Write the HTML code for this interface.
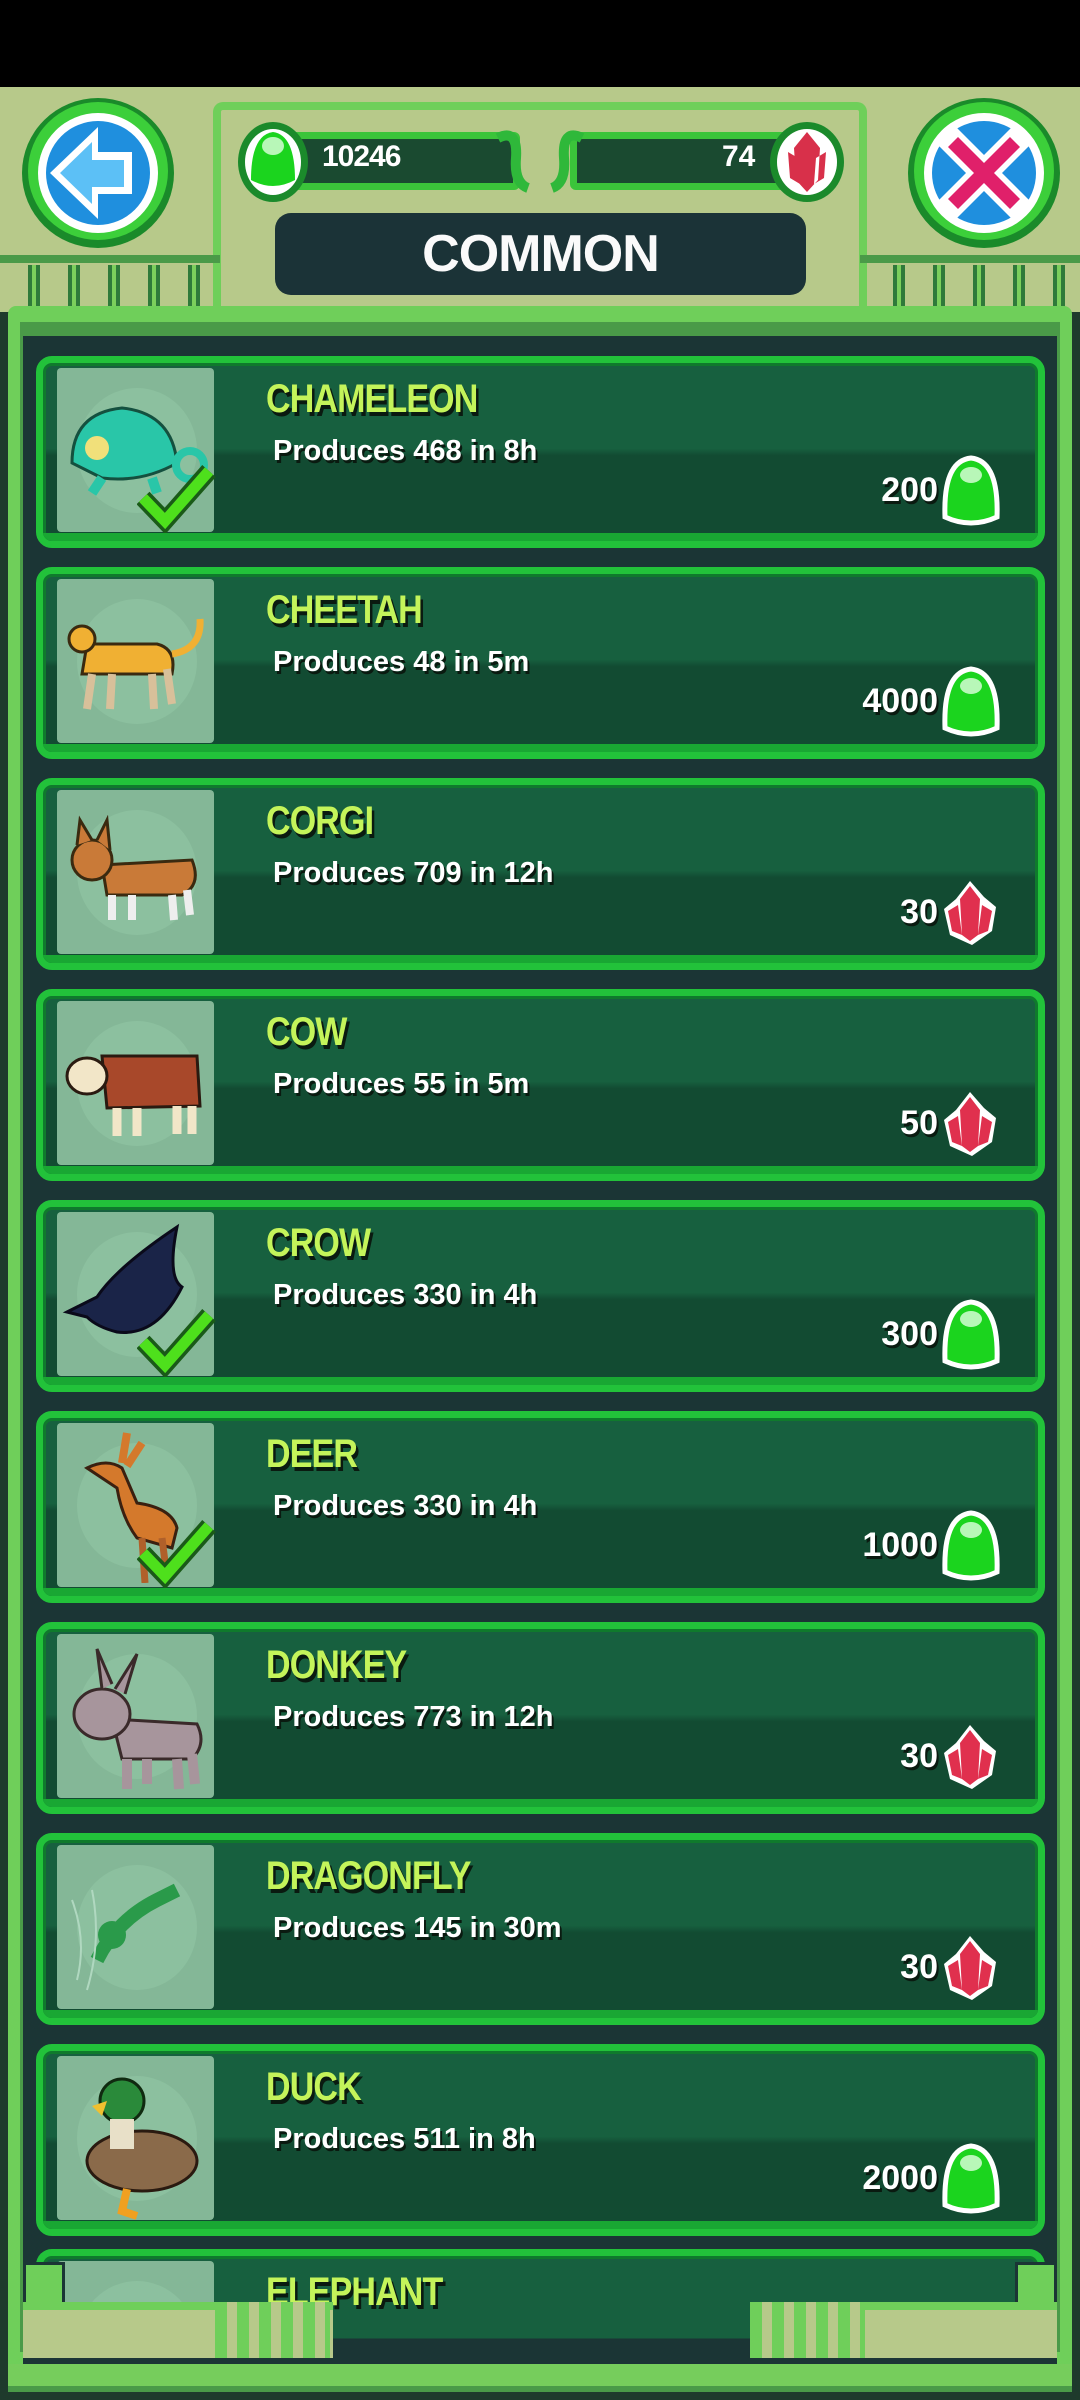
<!DOCTYPE html>
<html><head><meta charset="utf-8">
<style>
*{margin:0;padding:0;box-sizing:border-box}
body{width:1080px;height:2400px;overflow:hidden;background:#1e3a2c;position:relative;font-family:"Liberation Sans",sans-serif}
.abs{position:absolute}
.card{position:absolute;left:36px;width:1009px;height:192px;border-radius:16px;border:7px solid #22c23a;background:linear-gradient(#17603f 0,#17603f 48%,#124b32 52%,#124b32 100%);box-shadow:inset 0 0 0 3px #0f7a2c;overflow:hidden}
.card:before{content:"";position:absolute;left:0;right:0;bottom:0;height:8px;background:#19a733}
.thumb{position:absolute;left:14px;top:5px;width:157px;height:164px;background:#84b797;border-radius:4px}
.thumb .c{position:absolute;left:20px;top:20px;width:120px;height:125px;border-radius:50%;background:#8cc09f}
.name{position:absolute;left:223px;top:14px;font-weight:bold;font-size:40px;color:#c4f45a;letter-spacing:-1px;text-shadow:3px 4px 0 #0a1a10;transform:scaleX(.85);transform-origin:left}
.desc{position:absolute;left:230px;top:72px;font-weight:bold;font-size:29px;color:#fff;text-shadow:2px 3px 0 #0a1a10}
.price{position:absolute;right:100px;top:108px;font-weight:bold;font-size:34px;color:#fff;text-shadow:2px 3px 0 #0a1a10}
.icon{position:absolute;right:36px;top:92px}
.check{position:absolute;left:80px;top:95px}
</style></head><body>
<div class="abs" style="left:0;top:0;width:1080px;height:87px;background:#000"></div>
<div class="abs" style="left:0;top:87px;width:1080px;height:225px;background:#b7c98a"></div>
<!-- header frame -->
<div class="abs" style="left:213px;top:102px;width:654px;height:210px;border:8px solid #6fcf5a;border-bottom:none;border-radius:10px 10px 0 0"></div>
<div class="abs" style="left:0;top:255px;width:220px;height:8px;background:#4a9a48"></div>
<div class="abs" style="left:860px;top:255px;width:220px;height:8px;background:#4a9a48"></div>
<div class="abs" style="left:0;top:265px;width:215px;height:45px;background:repeating-linear-gradient(90deg,transparent 0,transparent 28px,#2f7a3a 28px,#2f7a3a 32px,#7ccf5c 32px,#7ccf5c 36px,#2f7a3a 36px,#2f7a3a 40px)"></div>
<div class="abs" style="left:865px;top:265px;width:215px;height:45px;background:repeating-linear-gradient(90deg,transparent 0,transparent 28px,#2f7a3a 28px,#2f7a3a 32px,#7ccf5c 32px,#7ccf5c 36px,#2f7a3a 36px,#2f7a3a 40px)"></div>
<!-- back button -->
<svg class="abs" style="left:20px;top:97px" width="156" height="152" viewBox="0 0 156 152">
<ellipse cx="78" cy="76" rx="76" ry="75" fill="#1a8a2a"/><ellipse cx="78" cy="74" rx="70" ry="69" fill="#3ccf3a"/>
<ellipse cx="78" cy="76" rx="60" ry="60" fill="#fff"/><ellipse cx="78" cy="76" rx="52" ry="52" fill="#1f8fde"/>
<path d="M30 76 L78 30 L78 55 L112 55 L112 97 L78 97 L78 122 Z" fill="#fff"/>
<path d="M40 76 L72 45 L72 63 L104 63 L104 90 L72 90 L72 107 Z" fill="#5cc0f6"/>
</svg>
<!-- close button -->
<svg class="abs" style="left:906px;top:97px" width="156" height="152" viewBox="0 0 156 152">
<ellipse cx="78" cy="76" rx="76" ry="75" fill="#1a8a2a"/><ellipse cx="78" cy="74" rx="70" ry="69" fill="#3ccf3a"/>
<ellipse cx="78" cy="76" rx="60" ry="60" fill="#fff"/><ellipse cx="78" cy="76" rx="52" ry="52" fill="#1f8fde"/>
<path d="M50 30 L78 58 L106 30 L124 48 L96 76 L124 104 L106 122 L78 94 L50 122 L32 104 L60 76 L32 48 Z" fill="#fff"/>
<path d="M52 40 L78 66 L104 40 L114 50 L88 76 L114 102 L104 112 L78 86 L52 112 L42 102 L68 76 L42 50 Z" fill="#e0206a"/>
</svg>
<!-- currency bar -->
<div class="abs" style="left:290px;top:132px;width:230px;height:58px;background:#1a4a30;border:7px solid #3bc43a;border-radius:6px"></div>
<div class="abs" style="left:570px;top:132px;width:230px;height:58px;background:#1a4a30;border:7px solid #3bc43a;border-radius:6px"></div>
<svg class="abs" style="left:236px;top:120px" width="74" height="84" viewBox="0 0 74 84"><ellipse cx="37" cy="42" rx="35" ry="40" fill="#1b8a2b"/><ellipse cx="37" cy="42" rx="28" ry="33" fill="#fff"/><path d="M15 60 Q15 15 37 12 Q59 15 59 60 Q37 72 15 60Z" fill="#1bd41e"/><ellipse cx="37" cy="26" rx="11" ry="9" fill="#b8f7b8"/></svg>
<div class="abs" style="left:322px;top:140px;font-weight:bold;font-size:30px;color:#fff;letter-spacing:-1px">10246</div>
<div class="abs" style="left:722px;top:140px;font-weight:bold;font-size:30px;color:#fff">74</div>
<svg class="abs" style="left:768px;top:120px" width="78" height="84" viewBox="0 0 78 84"><ellipse cx="39" cy="42" rx="37" ry="40" fill="#1b8a2b"/><ellipse cx="39" cy="42" rx="30" ry="33" fill="#fff"/><path d="M39 12 L52 28 L50 60 L39 72 L28 60 L26 28Z M20 32 L30 38 L32 64 L22 58Z M58 32 L48 38 L46 64 L56 58Z" fill="#d8304a"/></svg>
<svg class="abs" style="left:488px;top:128px" width="104" height="66" viewBox="0 0 104 66"><path d="M10 10 Q30 0 28 30 Q26 55 40 60 M94 10 Q74 0 76 30 Q78 55 64 60" stroke="#2fb83a" stroke-width="10" fill="none"/></svg>
<!-- COMMON -->
<div class="abs" style="left:275px;top:213px;width:531px;height:82px;background:#1b3337;border-radius:16px;color:#fafafa;font-weight:bold;font-size:52px;text-align:center;line-height:82px;letter-spacing:-1px">COMMON</div>
<!-- main panel frame -->
<div class="abs" style="left:8px;top:306px;width:1064px;height:2090px;background:#6fcf5a;border-radius:8px"></div>
<div class="abs" style="left:20px;top:322px;width:1040px;height:2030px;background:#4a9a48"></div>
<div class="abs" style="left:23px;top:336px;width:1034px;height:2020px;background:#1b3535"></div>

<!-- cards -->
<div class="card" style="top:356px"><div class="thumb"><div class="c"></div>
<svg class="abs" style="left:5px;top:25px" width="150" height="110"><path d="M10 70 Q10 20 60 15 Q110 20 115 70 Q80 90 40 85Z" fill="#29c6a8" stroke="#14503f" stroke-width="3"/><circle cx="35" cy="55" r="12" fill="#f1e07a"/><circle cx="128" cy="72" r="14" fill="none" stroke="#29c6a8" stroke-width="8"/><path d="M40 85 L30 100 M90 85 L95 100" stroke="#29c6a8" stroke-width="10"/></svg>
<svg class="check" width="80" height="70"><path d="M6 35 L28 58 L72 8" stroke="#1a5a18" stroke-width="18" fill="none"/><path d="M6 35 L28 58 L72 8" stroke="#4ee01c" stroke-width="11" fill="none"/></svg></div>
<div class="name">CHAMELEON</div><div class="desc">Produces 468 in 8h</div><div class="price">200</div>
<svg class="icon" width="62" height="72"><path d="M5 62 Q3 6 31 3 Q59 6 57 62 Q31 74 5 62Z" fill="#1bd41e" stroke="#fff" stroke-width="5"/><ellipse cx="31" cy="20" rx="11" ry="8" fill="#b8f7b8"/></svg></div>

<div class="card" style="top:567px"><div class="thumb"><div class="c"></div>
<svg class="abs" style="left:5px;top:35px" width="150" height="110"><path d="M25 30 L95 30 Q115 35 110 60 L20 60Z" fill="#f0b033" stroke="#3a2a10" stroke-width="3"/><circle cx="20" cy="25" r="13" fill="#f0b033" stroke="#3a2a10" stroke-width="3"/><path d="M30 60 L25 95 M50 60 L48 95 M90 60 L92 95 M105 55 L110 90" stroke="#d8c09a" stroke-width="8"/><path d="M110 40 Q140 35 138 5" stroke="#f0b033" stroke-width="7" fill="none"/></svg></div>
<div class="name">CHEETAH</div><div class="desc">Produces 48 in 5m</div><div class="price">4000</div>
<svg class="icon" width="62" height="72"><path d="M5 62 Q3 6 31 3 Q59 6 57 62 Q31 74 5 62Z" fill="#1bd41e" stroke="#fff" stroke-width="5"/><ellipse cx="31" cy="20" rx="11" ry="8" fill="#b8f7b8"/></svg></div>

<div class="card" style="top:778px"><div class="thumb"><div class="c"></div>
<svg class="abs" style="left:5px;top:25px" width="150" height="120"><path d="M40 50 L130 45 Q140 70 120 80 L45 80Z" fill="#c97a38" stroke="#3a2a10" stroke-width="3"/><circle cx="30" cy="45" r="20" fill="#c97a38" stroke="#3a2a10" stroke-width="3"/><path d="M15 30 L18 5 L30 25 M35 25 L45 5 L48 35" fill="#c97a38" stroke="#3a2a10" stroke-width="3"/><path d="M50 80 L50 105 M70 80 L70 105 M110 80 L112 105 M125 75 L128 100" stroke="#eee" stroke-width="8"/></svg></div>
<div class="name">CORGI</div><div class="desc">Produces 709 in 12h</div><div class="price">30</div>
<svg class="icon" width="64" height="72" viewBox="0 0 64 72"><path d="M32 4 L46 20 L58 30 L54 54 L34 68 L12 58 L6 32 L18 22Z" fill="#fff"/><path d="M32 9 L42 22 L40 58 L32 64 L24 58 L22 22Z M10 34 L20 28 L24 58 L14 54Z M54 34 L44 28 L40 58 L50 54Z" fill="#e0304e"/></svg></div>

<div class="card" style="top:989px"><div class="thumb"><div class="c"></div>
<svg class="abs" style="left:5px;top:35px" width="150" height="110"><path d="M40 20 L135 20 L138 70 L45 72Z" fill="#a8482a" stroke="#2a1a10" stroke-width="3"/><ellipse cx="25" cy="40" rx="20" ry="18" fill="#f2e6c8" stroke="#2a1a10" stroke-width="3"/><path d="M55 72 L55 100 M75 72 L75 100 M115 70 L115 98 M130 70 L130 98" stroke="#f2e6c8" stroke-width="9"/></svg></div>
<div class="name">COW</div><div class="desc">Produces 55 in 5m</div><div class="price">50</div>
<svg class="icon" width="64" height="72" viewBox="0 0 64 72"><path d="M32 4 L46 20 L58 30 L54 54 L34 68 L12 58 L6 32 L18 22Z" fill="#fff"/><path d="M32 9 L42 22 L40 58 L32 64 L24 58 L22 22Z M10 34 L20 28 L24 58 L14 54Z M54 34 L44 28 L40 58 L50 54Z" fill="#e0304e"/></svg></div>

<div class="card" style="top:1200px"><div class="thumb"><div class="c"></div>
<svg class="abs" style="left:0;top:5px" width="155" height="150"><path d="M10 95 L40 80 Q60 50 120 10 Q110 60 125 70 Q100 120 60 115 Q40 110 30 100Z" fill="#1a2448" stroke="#0a0a1a" stroke-width="3"/></svg>
<svg class="check" width="80" height="70"><path d="M6 35 L28 58 L72 8" stroke="#1a5a18" stroke-width="18" fill="none"/><path d="M6 35 L28 58 L72 8" stroke="#4ee01c" stroke-width="11" fill="none"/></svg></div>
<div class="name">CROW</div><div class="desc">Produces 330 in 4h</div><div class="price">300</div>
<svg class="icon" width="62" height="72"><path d="M5 62 Q3 6 31 3 Q59 6 57 62 Q31 74 5 62Z" fill="#1bd41e" stroke="#fff" stroke-width="5"/><ellipse cx="31" cy="20" rx="11" ry="8" fill="#b8f7b8"/></svg></div>

<div class="card" style="top:1411px"><div class="thumb"><div class="c"></div>
<svg class="abs" style="left:20px;top:5px" width="130" height="155"><path d="M10 40 Q30 30 45 40 L60 75 Q95 80 100 100 L95 120 L60 110 Q45 90 40 60Z" fill="#d4792c" stroke="#3a2010" stroke-width="3"/><path d="M45 35 L50 5 M50 38 L65 15" stroke="#d4792c" stroke-width="8"/><path d="M65 110 L68 155 M85 110 L90 150" stroke="#b0602a" stroke-width="7"/></svg>
<svg class="check" width="80" height="70"><path d="M6 35 L28 58 L72 8" stroke="#1a5a18" stroke-width="18" fill="none"/><path d="M6 35 L28 58 L72 8" stroke="#4ee01c" stroke-width="11" fill="none"/></svg></div>
<div class="name">DEER</div><div class="desc">Produces 330 in 4h</div><div class="price">1000</div>
<svg class="icon" width="62" height="72"><path d="M5 62 Q3 6 31 3 Q59 6 57 62 Q31 74 5 62Z" fill="#1bd41e" stroke="#fff" stroke-width="5"/><ellipse cx="31" cy="20" rx="11" ry="8" fill="#b8f7b8"/></svg></div>

<div class="card" style="top:1622px"><div class="thumb"><div class="c"></div>
<svg class="abs" style="left:10px;top:10px" width="140" height="150"><path d="M45 75 L130 80 Q140 100 125 115 L55 115Z" fill="#a7959c" stroke="#3a2a2a" stroke-width="3"/><ellipse cx="35" cy="70" rx="28" ry="25" fill="#a7959c" stroke="#3a2a2a" stroke-width="3"/><path d="M35 45 L30 5 L45 40 M48 45 L70 10 L58 50" fill="#a7959c" stroke="#3a2a2a" stroke-width="3"/><path d="M60 115 L60 145 M80 115 L80 140 M110 115 L112 145 M125 110 L128 140" stroke="#a7959c" stroke-width="10"/></svg></div>
<div class="name">DONKEY</div><div class="desc">Produces 773 in 12h</div><div class="price">30</div>
<svg class="icon" width="64" height="72" viewBox="0 0 64 72"><path d="M32 4 L46 20 L58 30 L54 54 L34 68 L12 58 L6 32 L18 22Z" fill="#fff"/><path d="M32 9 L42 22 L40 58 L32 64 L24 58 L22 22Z M10 34 L20 28 L24 58 L14 54Z M54 34 L44 28 L40 58 L50 54Z" fill="#e0304e"/></svg></div>

<div class="card" style="top:1833px"><div class="thumb"><div class="c"></div>
<svg class="abs" style="left:10px;top:15px" width="140" height="140"><path d="M30 100 Q50 60 90 40 L110 30" stroke="#2a9a4a" stroke-width="14" fill="none"/><circle cx="45" cy="75" r="14" fill="#2a9a4a"/><path d="M5 40 Q20 80 10 120 M25 30 Q35 80 20 130" stroke="#b0d8c0" stroke-width="2" fill="none"/></svg></div>
<div class="name">DRAGONFLY</div><div class="desc">Produces 145 in 30m</div><div class="price">30</div>
<svg class="icon" width="64" height="72" viewBox="0 0 64 72"><path d="M32 4 L46 20 L58 30 L54 54 L34 68 L12 58 L6 32 L18 22Z" fill="#fff"/><path d="M32 9 L42 22 L40 58 L32 64 L24 58 L22 22Z M10 34 L20 28 L24 58 L14 54Z M54 34 L44 28 L40 58 L50 54Z" fill="#e0304e"/></svg></div>

<div class="card" style="top:2044px"><div class="thumb"><div class="c"></div>
<svg class="abs" style="left:15px;top:5px" width="140" height="160"><ellipse cx="70" cy="100" rx="55" ry="30" fill="#8a6a4a" stroke="#2a1a10" stroke-width="3"/><circle cx="50" cy="40" r="22" fill="#2a8a3a" stroke="#102a10" stroke-width="3"/><rect x="38" y="58" width="24" height="30" fill="#e8e0c8"/><path d="M20 45 L35 40 L30 55Z" fill="#f0c030"/><path d="M55 128 L50 150 L65 155" stroke="#f0a020" stroke-width="8" fill="none"/></svg></div>
<div class="name">DUCK</div><div class="desc">Produces 511 in 8h</div><div class="price">2000</div>
<svg class="icon" width="62" height="72"><path d="M5 62 Q3 6 31 3 Q59 6 57 62 Q31 74 5 62Z" fill="#1bd41e" stroke="#fff" stroke-width="5"/><ellipse cx="31" cy="20" rx="11" ry="8" fill="#b8f7b8"/></svg></div>

<div class="card" style="top:2249px;height:140px;border-bottom:none;background:linear-gradient(#17603f 0,#17603f 62%,#1b3535 62%)"><div class="thumb" style="height:130px"><div class="c"></div><div class="abs" style="left:40px;top:60px;width:80px;height:60px;border-radius:50%;background:#8080c8"></div></div>
<div class="name">ELEPHANT</div></div>

<!-- bottom ornaments -->
<div class="abs" style="left:23px;top:2262px;width:42px;height:44px;background:#6fcf5a;border:3px solid #1b3535"></div>
<div class="abs" style="left:23px;top:2302px;width:310px;height:58px;background:#b7c98a;border-top:8px solid #6fcf5a"></div>
<div class="abs" style="left:215px;top:2302px;width:115px;height:58px;background:repeating-linear-gradient(90deg,#6fcf5a 0,#6fcf5a 12px,#b7c98a 12px,#b7c98a 22px)"></div>
<div class="abs" style="left:1015px;top:2262px;width:42px;height:44px;background:#6fcf5a;border:3px solid #1b3535"></div>
<div class="abs" style="left:750px;top:2302px;width:307px;height:58px;background:#b7c98a;border-top:8px solid #6fcf5a"></div>
<div class="abs" style="left:750px;top:2302px;width:115px;height:58px;background:repeating-linear-gradient(90deg,#6fcf5a 0,#6fcf5a 12px,#b7c98a 12px,#b7c98a 22px)"></div>
<div class="abs" style="left:23px;top:2358px;width:1034px;height:6px;background:#1b3535"></div>
<div class="abs" style="left:8px;top:2364px;width:1064px;height:22px;background:#76cd5c"></div>
<div class="abs" style="left:8px;top:2386px;width:1064px;height:6px;background:#4a9a48"></div>
<div class="abs" style="left:0;top:2392px;width:1080px;height:8px;background:#1e3a2c"></div>
</body></html>
